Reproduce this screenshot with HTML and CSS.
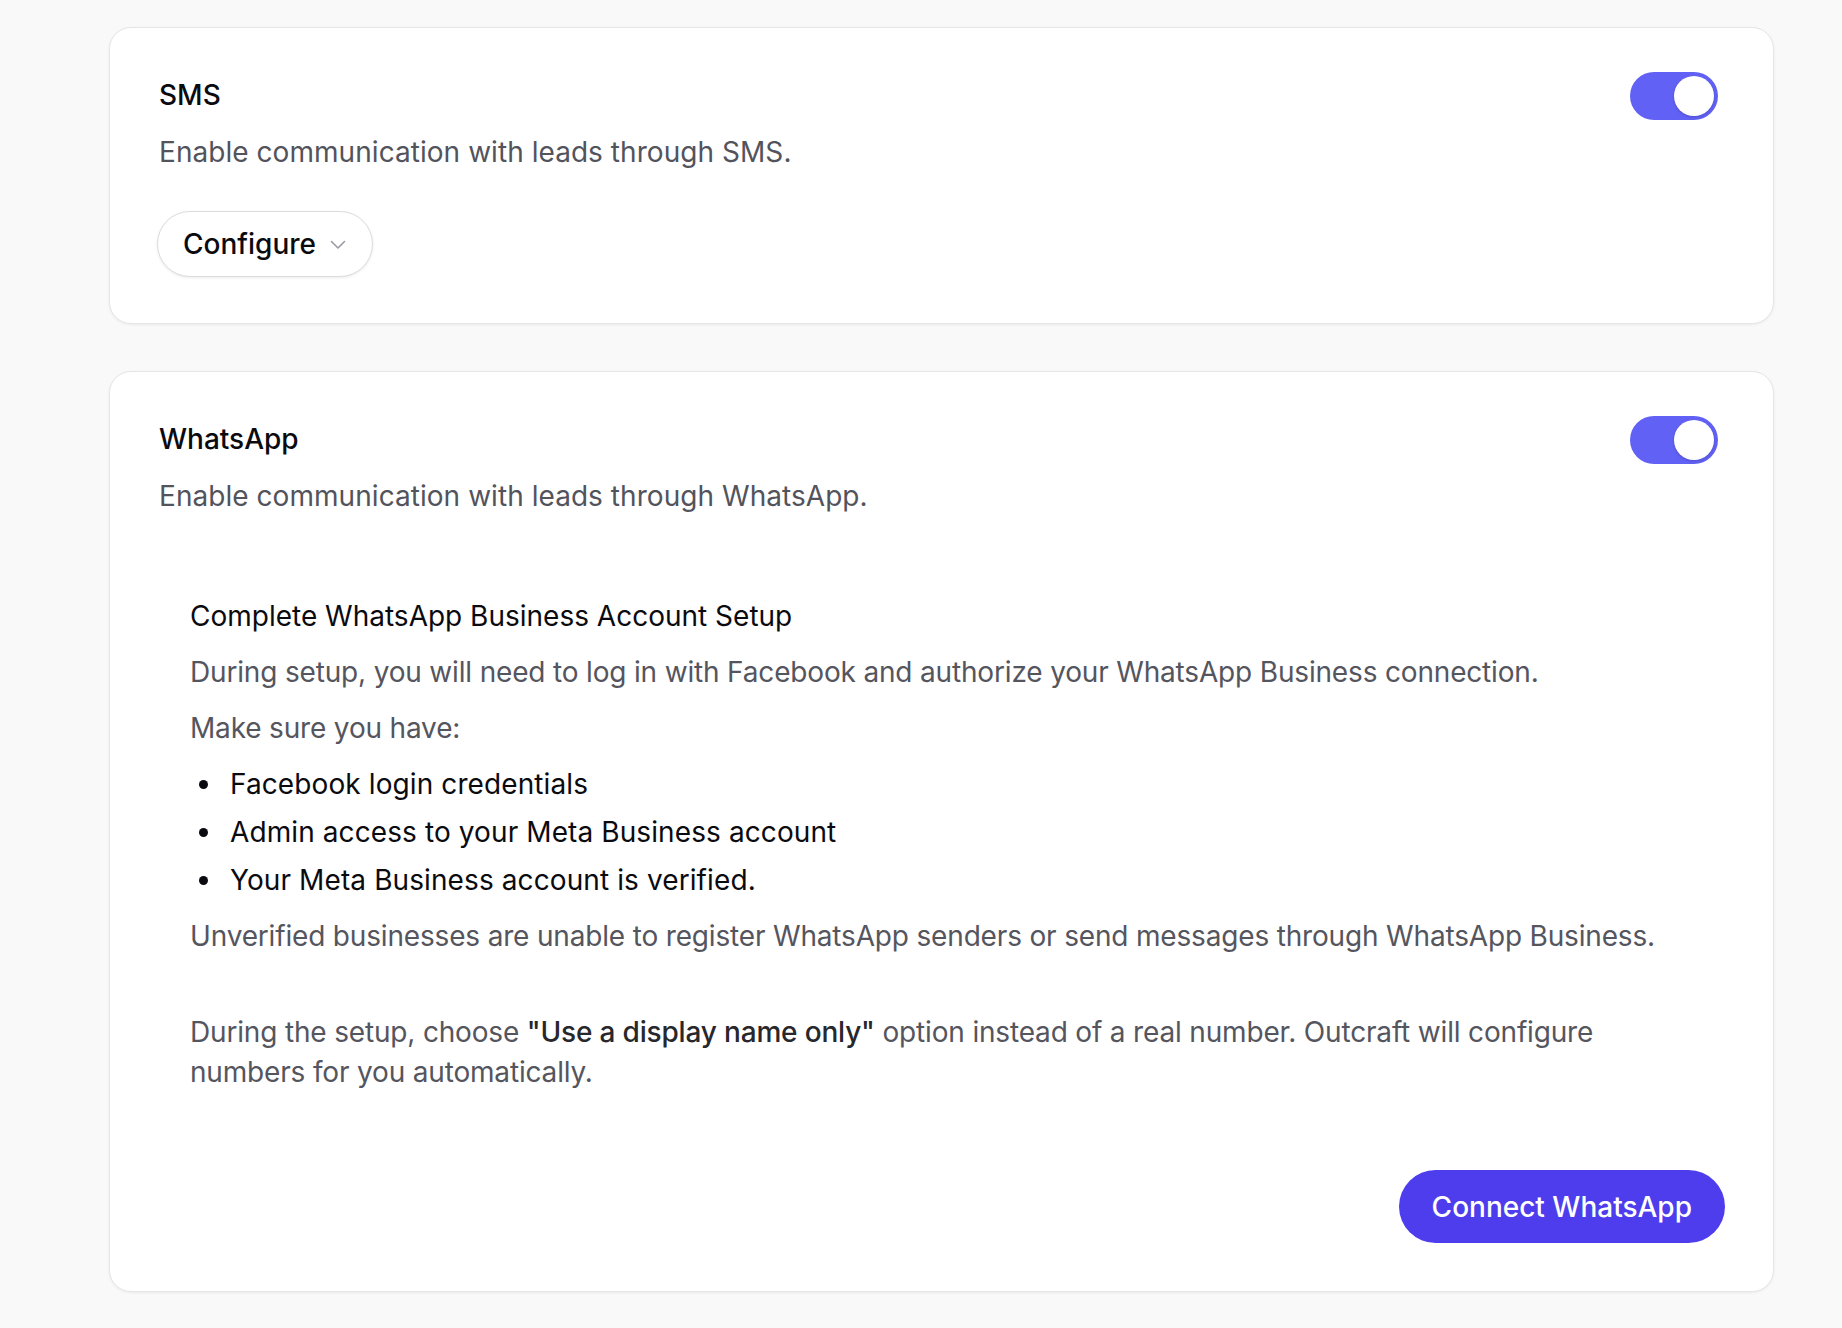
FILE: index.html
```html
<!DOCTYPE html>
<html lang="en">
<head>
<meta charset="utf-8">
<title>Channels</title>
<link rel="stylesheet" href="styles.css">
</head>
<body>
<main class="page">
  <section class="card">
    <div class="card-head">
      <div class="card-text">
        <h2 class="card-title">SMS</h2>
        <p class="card-desc">Enable communication with leads through SMS.</p>
      </div>
      <span class="toggle"><span class="knob"></span></span>
    </div>
    <button class="btn-outline" type="button">Configure
      <svg class="chev" width="16" height="10" viewBox="0 0 16 10"><path d="M1.5 1.5 L8 8 L14.5 1.5" fill="none" stroke="#9a9aa3" stroke-width="1.6" stroke-linecap="round" stroke-linejoin="round"/></svg>
    </button>
  </section>

  <section class="card card-wa">
    <div class="card-head">
      <div class="card-text">
        <h2 class="card-title">WhatsApp</h2>
        <p class="card-desc">Enable communication with leads through WhatsApp.</p>
      </div>
      <span class="toggle"><span class="knob"></span></span>
    </div>
    <div class="setup">
      <h3 class="setup-title">Complete WhatsApp Business Account Setup</h3>
      <p class="muted">During setup, you will need to log in with Facebook and authorize your WhatsApp Business connection.</p>
      <p class="muted">Make sure you have:</p>
      <ul class="reqs">
        <li>Facebook login credentials</li>
        <li>Admin access to your Meta Business account</li>
        <li>Your Meta Business account is verified.</li>
      </ul>
      <p class="muted">Unverified businesses are unable to register WhatsApp senders or send messages through WhatsApp Business.</p>
      <p class="muted note">During the setup, choose <strong>"Use a display name only"</strong> option instead of a real number. Outcraft will configure numbers for you automatically.</p>
    </div>
    <div class="actions">
      <button class="btn-primary" type="button">Connect WhatsApp</button>
    </div>
  </section>
</main>
</body>
</html>
```

FILE: styles.css
```css
* { box-sizing: border-box; }

html, body {
  margin: 0;
  padding: 0;
  background: #f9f9f9;
}

body {
  font-family: Inter, "Noto Sans", sans-serif;
  color: #0b0b0f;
  -webkit-font-smoothing: antialiased;
}

.page {
  display: flex;
  flex-direction: column;
  gap: 47px;
  padding: 27px 68px 40px 109px;
}

.card {
  background: #ffffff;
  border: 1px solid #e6e6e9;
  border-radius: 22px;
  box-shadow: 0 1px 3px rgba(0, 0, 0, 0.06);
  padding: 47px 48px 46px 49px;
}

.card-wa {
  padding-top: 47px;
  padding-bottom: 48px;
}

.card-head {
  display: flex;
  justify-content: space-between;
  align-items: flex-start;
}

.card-text {
  display: flex;
  flex-direction: column;
  gap: 17px;
}

.card-title {
  margin: 0;
  font-size: 28px;
  line-height: 40px;
  font-weight: 500;
  color: #0b0b0f;
}

.card-desc {
  margin: 0;
  font-size: 28px;
  line-height: 40px;
  font-weight: 400;
  color: #53535c;
  letter-spacing: 0.05px;
}

.toggle {
  display: flex;
  align-items: center;
  justify-content: flex-end;
  width: 88px;
  height: 48px;
  padding: 4px;
  margin-top: -3px;
  margin-right: 7px;
  border-radius: 24px;
  background: #6161f5;
}

.knob {
  width: 40px;
  height: 40px;
  border-radius: 50%;
  background: #ffffff;
  box-shadow: 0 1px 3px rgba(0, 0, 0, 0.18);
}

.btn-outline {
  display: inline-flex;
  align-items: center;
  gap: 14px;
  margin-top: 39px;
  margin-left: -2px;
  height: 66px;
  padding: 0 26px 0 25px;
  border: 1.5px solid #dcdce0;
  border-radius: 33px;
  background: #ffffff;
  box-shadow: 0 1px 3px rgba(0, 0, 0, 0.08);
  font-family: inherit;
  font-size: 28px;
  font-weight: 500;
  color: #0b0b0f;
}

.chev { display: block; margin-top: 2px; }

.setup {
  padding: 80px 32px 0 31px;
}

.setup-title {
  margin: 0;
  font-size: 28px;
  line-height: 40px;
  font-weight: 400;
  color: #0b0b0f;
}

.muted {
  margin: 16px 0 0;
  font-size: 28px;
  line-height: 40px;
  color: #55555e;
  letter-spacing: -0.17px;
}

.muted strong {
  font-weight: 500;
  color: #27272c;
}

.note { margin-top: 56px; }

.reqs {
  list-style: none;
  margin: 16px 0 0;
  padding: 0;
  display: flex;
  flex-direction: column;
  gap: 8px;
}

.reqs li {
  display: flex;
  align-items: center;
  font-size: 28px;
  line-height: 40px;
  color: #0b0b0f;
  letter-spacing: 0.1px;
}

.reqs li::before {
  content: "";
  flex: none;
  width: 9px;
  height: 9px;
  border-radius: 50%;
  background: #0b0b0f;
  margin: 0 22px 0 9px;
}

.actions {
  display: flex;
  justify-content: flex-end;
  margin-top: 78px;
}

.btn-primary {
  height: 73px;
  padding: 0 33px;
  border: none;
  border-radius: 37px;
  background: #4d3ded;
  color: #ffffff;
  font-family: inherit;
  font-size: 28px;
  font-weight: 500;
}
```
